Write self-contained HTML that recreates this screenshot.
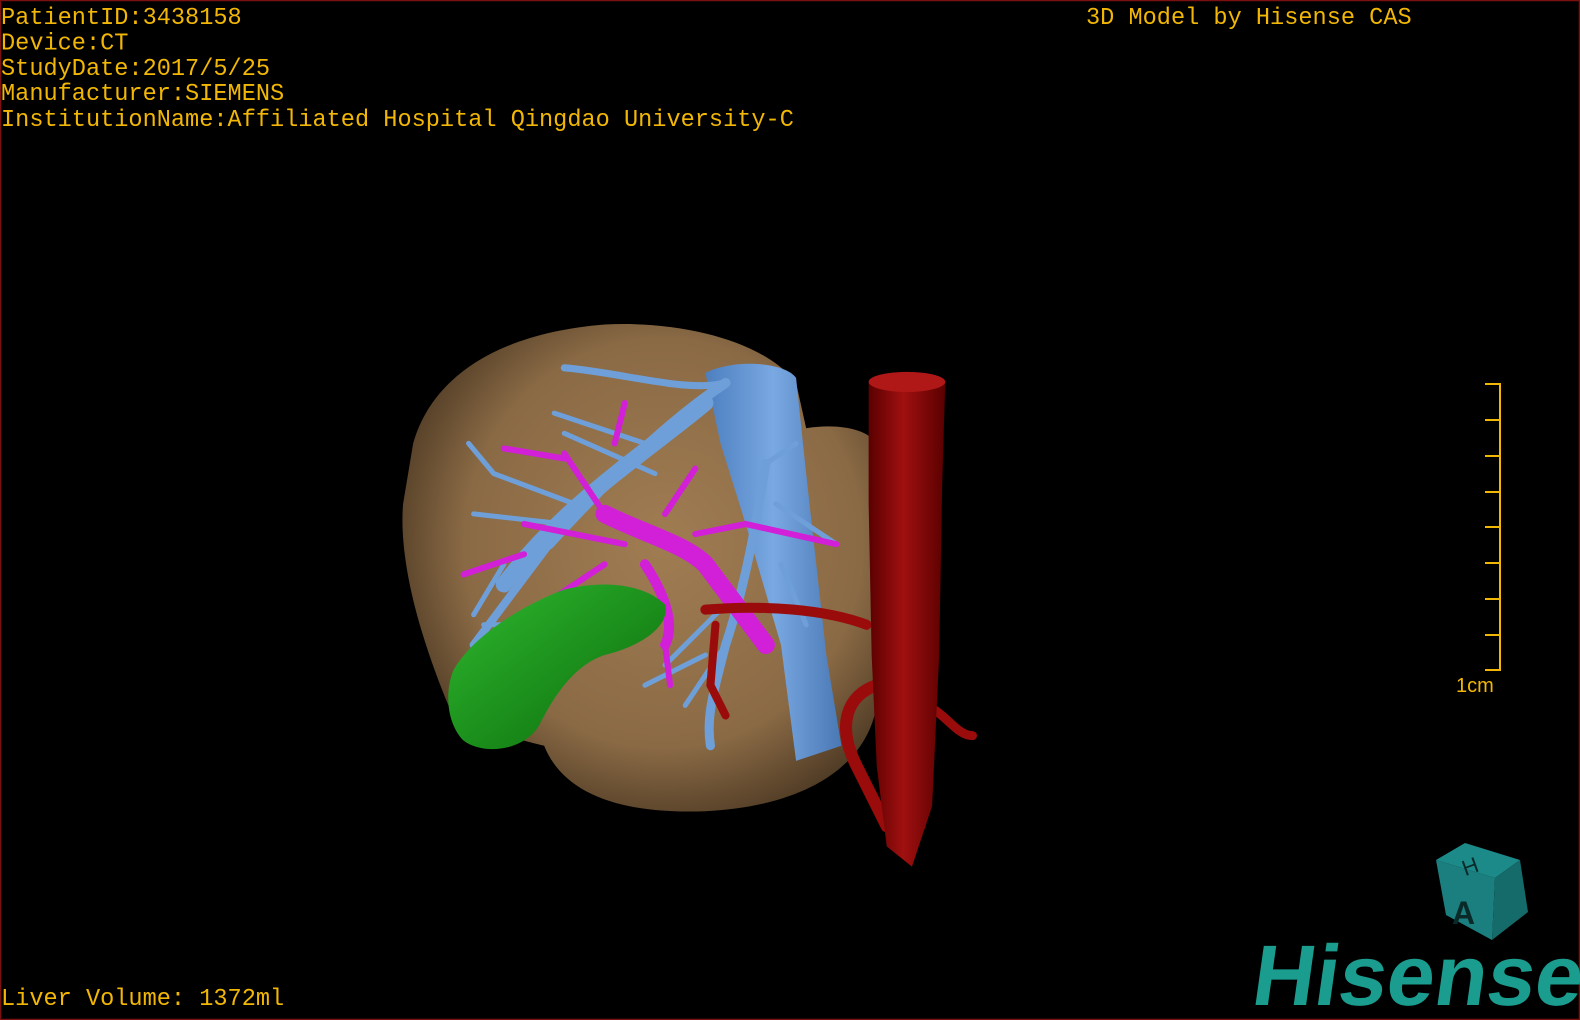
<!DOCTYPE html>
<html><head><meta charset="utf-8"><style>
html,body{margin:0;padding:0;background:#000;width:1580px;height:1020px;overflow:hidden}
svg{display:block}
.t{font-family:"Liberation Mono",monospace;font-size:23.6px;fill:#f2b705}
</style></head><body>
<svg width="1580" height="1020" viewBox="0 0 1580 1020" xmlns="http://www.w3.org/2000/svg">
<defs>
<radialGradient id="liv" cx="0.55" cy="0.45" r="0.6">
<stop offset="0" stop-color="#a07c52"/><stop offset="0.7" stop-color="#8a6a45"/><stop offset="1" stop-color="#4e3a24"/>
</radialGradient>
<linearGradient id="ao" x1="0" x2="1"><stop offset="0" stop-color="#5a0000"/><stop offset="0.45" stop-color="#a01010"/><stop offset="1" stop-color="#5a0000"/></linearGradient>
<linearGradient id="gb" x1="0" y1="0" x2="1" y2="1"><stop offset="0" stop-color="#2fb82f"/><stop offset="1" stop-color="#0a6a0a"/></linearGradient>
<linearGradient id="ivc" x1="0" x2="1"><stop offset="0" stop-color="#4d7fbf"/><stop offset="0.5" stop-color="#79a8e2"/><stop offset="1" stop-color="#4a78b4"/></linearGradient>
</defs>
<rect x="0.5" y="0.5" width="1579" height="1019" fill="#000" stroke="#7a1010" stroke-width="1.5"/>
<g transform="scale(1.0077)">
<path d="M410 440 C430 370 500 330 600 322 C680 318 760 340 790 380 L800 425 C830 420 860 425 870 440 L870 700 C860 760 800 800 700 805 C620 808 560 790 540 740 C500 730 460 720 445 700 C420 640 395 560 400 500 Z" fill="url(#liv)"/>
<path d="M700 370 C730 355 780 360 790 375 L800 470 L810 560 L820 650 L835 740 L790 755 L775 640 L740 520 L715 440 Z" fill="url(#ivc)"/>
<g stroke="#6f9fd8" stroke-linecap="round" fill="none">
<path d="M500 580 C560 500 640 450 700 400" stroke-width="16"/>
<path d="M545 540 C600 480 660 420 720 380" stroke-width="10"/>
<path d="M560 365 C620 370 680 390 720 380" stroke-width="7"/>
<path d="M470 640 C500 600 530 560 560 520" stroke-width="8"/>
<path d="M470 510 L560 520 M490 470 L570 500 M550 410 L640 440 M560 430 L650 470 M465 440 L490 470 M480 620 L520 620 M500 560 L470 610" stroke-width="5"/>
<path d="M760 460 C750 520 740 580 720 640 C710 680 700 710 705 740" stroke-width="9"/>
<path d="M760 460 L790 440 M770 500 L830 540 M775 560 L800 620 M720 600 L660 660 M700 650 L640 680 M720 640 L680 700" stroke-width="5"/>
</g>
<g stroke="#d21fd8" stroke-linecap="round" fill="none">
<path d="M600 510 C640 530 680 540 700 560 L760 640" stroke-width="18"/>
<path d="M640 560 C660 590 670 620 660 640" stroke-width="10"/>
<path d="M560 450 L600 510 M500 445 L560 455 M690 530 L740 520 L830 540 M520 520 L620 540 M460 570 L520 550 M600 560 L540 600 M660 640 L665 680 M690 465 L660 510 M620 400 L610 440" stroke-width="6"/>
</g>
<path d="M450 665 C470 630 520 600 560 585 C600 575 640 580 660 600 C665 620 640 640 600 650 C570 660 550 690 535 720 C520 745 480 750 460 735 C445 720 440 690 450 665 Z" fill="url(#gb)"/>
<g stroke="#9a0c0c" stroke-linecap="round" fill="none">
<path d="M700 605 C760 600 820 605 860 620" stroke-width="10"/>
<path d="M710 620 L705 680 L720 710" stroke-width="8"/>
<path d="M870 680 C840 690 830 720 850 760 L880 820" stroke-width="12"/>
<path d="M920 700 C940 710 950 730 965 730" stroke-width="9"/>
<path d="M880 730 C900 760 910 790 915 820" stroke-width="7"/>
</g>
<path d="M862 380 C880 368 925 368 938 380 L935 480 L932 650 L925 800 L915 830 L905 860 L880 840 L870 760 L865 650 L862 500 Z" fill="url(#ao)"/>
<ellipse cx="900" cy="379" rx="38" ry="10" fill="#b01818"/>
</g>
<text class="t" x="1" y="24">PatientID:3438158</text>
<text class="t" x="1" y="49.5">Device:CT</text>
<text class="t" x="1" y="75">StudyDate:2017/5/25</text>
<text class="t" x="1" y="100">Manufacturer:SIEMENS</text>
<text class="t" x="1" y="126">InstitutionName:Affiliated Hospital Qingdao University-C</text>
<text class="t" x="1086" y="24">3D Model by Hisense CAS</text>
<text class="t" x="1" y="1005">Liver Volume: 1372ml</text>
<g stroke="#f2b705" stroke-width="2">
<line x1="1500" y1="383" x2="1500" y2="671"/>
<line x1="1485" y1="384" x2="1501" y2="384"/><line x1="1485" y1="420" x2="1501" y2="420"/>
<line x1="1485" y1="456" x2="1501" y2="456"/><line x1="1485" y1="492" x2="1501" y2="492"/>
<line x1="1485" y1="527" x2="1501" y2="527"/><line x1="1485" y1="563" x2="1501" y2="563"/>
<line x1="1485" y1="599" x2="1501" y2="599"/><line x1="1485" y1="635" x2="1501" y2="635"/>
<line x1="1485" y1="670" x2="1501" y2="670"/>
</g>
<text x="1456" y="692" font-family="Liberation Sans,sans-serif" font-size="20" fill="#f2b705">1cm</text>
<polygon points="1436,860 1465,843 1520,860 1495,878" fill="#1d8a8a"/>
<polygon points="1436,860 1495,878 1492,940 1446,915" fill="#1b7f7f"/>
<polygon points="1495,878 1520,860 1528,912 1492,940" fill="#156a6a"/>
<text x="1452" y="924" font-family="Liberation Sans,sans-serif" font-weight="bold" font-size="32" fill="#0a2a2a">A</text>
<text x="1462" y="874" font-family="Liberation Sans,sans-serif" font-size="22" fill="#0a2a2a" transform="rotate(-20 1470 866)">H</text>
<text x="1246" y="1005" font-family="Liberation Sans,sans-serif" font-weight="bold" font-size="86" fill="#1a9c8e" textLength="330" lengthAdjust="spacingAndGlyphs" transform="translate(145 0) skewX(-8)">Hisense</text>
</svg>
</body></html>
